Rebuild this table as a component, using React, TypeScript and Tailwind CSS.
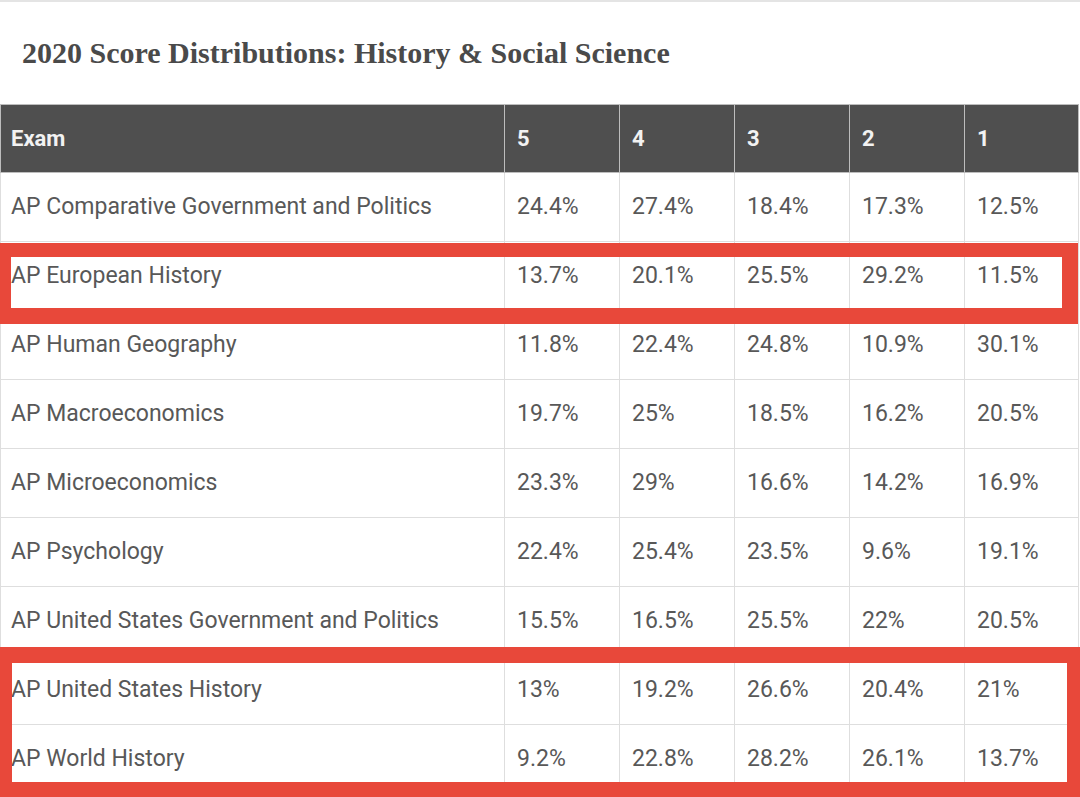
import React from "react"

const rows: [string, string, string, string, string, string][] = [
  ["AP Comparative Government and Politics", "24.4%", "27.4%", "18.4%", "17.3%", "12.5%"],
  ["AP European History", "13.7%", "20.1%", "25.5%", "29.2%", "11.5%"],
  ["AP Human Geography", "11.8%", "22.4%", "24.8%", "10.9%", "30.1%"],
  ["AP Macroeconomics", "19.7%", "25%", "18.5%", "16.2%", "20.5%"],
  ["AP Microeconomics", "23.3%", "29%", "16.6%", "14.2%", "16.9%"],
  ["AP Psychology", "22.4%", "25.4%", "23.5%", "9.6%", "19.1%"],
  ["AP United States Government and Politics", "15.5%", "16.5%", "25.5%", "22%", "20.5%"],
  ["AP United States History", "13%", "19.2%", "26.6%", "20.4%", "21%"],
  ["AP World History", "9.2%", "22.8%", "28.2%", "26.1%", "13.7%"],
]

const heads = ["Exam", "5", "4", "3", "2", "1"]

export default function App() {
  return (
    <div className="relative h-[797px] w-[1080px] overflow-hidden bg-white border-t-2 border-[#e4e4e4]">
      <div className="flex h-[102px] items-center pl-[22px] pb-[2px]">
        <h1 className="text-[30px] font-bold text-[#4a4a4a] [font-family:'Liberation_Serif',serif]">
          2020 Score Distributions: History &amp; Social Science
        </h1>
      </div>

      <table className="w-[1078px] table-fixed border-collapse text-[23px] [font-family:Roboto,'Liberation_Sans',sans-serif]">
        <colgroup>
          <col className="w-[504px]" />
          <col className="w-[115px]" />
          <col className="w-[115px]" />
          <col className="w-[115px]" />
          <col className="w-[115px]" />
          <col className="w-[114px]" />
        </colgroup>
        <thead>
          <tr className="h-[68px] bg-[#4f4f4f]">
            {heads.map((h, i) => (
              <th
                key={h}
                className={
                  i === 0
                    ? "border border-[#bdbdbd] pl-[10px] pr-[10px] text-left text-[22px] font-bold text-[#f2f2f2]"
                    : "border border-[#bdbdbd] px-[12px] text-left text-[22px] font-bold text-[#f2f2f2]"
                }
              >
                {h}
              </th>
            ))}
          </tr>
        </thead>
        <tbody>
          {rows.map((r) => (
            <tr key={r[0]} className="h-[69px]">
              {r.map((c, i) => (
                <td
                  key={i}
                  className={
                    i === 0
                      ? "border border-[#dedede] pl-[10px] pr-[10px] text-[#585858]"
                      : "border border-[#dedede] px-[12px] text-[#585858]"
                  }
                >
                  {c}
                </td>
              ))}
            </tr>
          ))}
        </tbody>
      </table>

      {/* red annotation boxes */}
      <div className="absolute left-0 top-[241px] h-[81px] w-[1078px] border-[#e8483a] border-l-[11px] border-r-[16px] border-t-[14px] border-b-[16px]" />
      <div className="absolute left-0 top-[645px] h-[152px] w-[1080px] border-[#e8483a] border-l-[12px] border-r-[13px] border-t-[16px] border-b-[17px]" />
    </div>
  )
}
